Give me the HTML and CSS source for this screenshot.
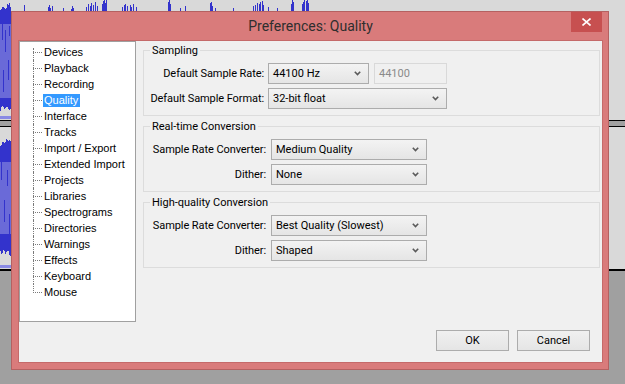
FILE: index.html
```html
<!DOCTYPE html>
<html lang="en">
<head>
<meta charset="utf-8">
<title>Preferences: Quality</title>
<link rel="stylesheet" href="styles.css">
</head>
<body>
<div class="desktop">
  <svg class="backdrop" width="625" height="384" viewBox="0 0 625 384" shape-rendering="crispEdges">
    <rect x="0" y="0" width="625" height="120" fill="#d9d9d9"/>
    <rect x="0" y="120" width="625" height="1" fill="#000"/>
    <rect x="0" y="126" width="625" height="1" fill="#000"/>
    <rect x="0" y="127" width="625" height="142" fill="#d9d9d9"/>
    <rect x="0" y="269" width="625" height="2" fill="#000"/>
    <polygon fill="#3333cc" points="0,12 1,8 2,10 3,4 4,9 5,7 6,10 7,6 8,3 9,7 10,2 11,11 11,112 10,106 9,114 8,104 7,111 6,103 5,113 4,105 3,110 2,102 1,113 0,108"/>
    <rect x="0" y="24" width="11" height="74" fill="#6a6ad8"/>
    <path stroke="#3333cc" stroke-width="1" fill="none" d="M2.5 24V40M5.5 30V52M8.5 60V80M3.5 70V92M9.5 26V36"/>
    <rect x="0" y="116" width="11" height="3" fill="#8a8ae4"/>
    <polygon fill="#3333cc" points="0,152 1,141 2,149 3,136 4,147 5,139 6,144 7,134 8,146 9,137 10,143 11,140 11,250 10,262 9,247 8,256 7,246 6,259 5,248 4,254 3,245 2,261 1,247 0,256"/>
    <rect x="0" y="162" width="11" height="72" fill="#6a6ad8"/>
    <path stroke="#3333cc" stroke-width="1" fill="none" d="M1.5 162V180M4.5 200V222M7.5 170V186M9.5 214V234"/>
    <rect x="0" y="265" width="11" height="3" fill="#8a8ae4"/>
    <path stroke="#3333cc" stroke-width="1" fill="none" d="M9.5 12V3M24.5 12V5M48.5 12V7M49.5 12V5M50.5 12V8M52.5 12V6M63.5 12V8M71.5 12V9M72.5 12V6M73.5 12V8M86.5 12V7M88.5 12V4M90.5 12V6M91.5 12V3M93.5 12V5M95.5 12V2M97.5 12V6M102.5 12V4M103.5 12V1M104.5 12V0M105.5 12V3M106.5 12V0M122.5 12V7M124.5 12V5M125.5 12V4M127.5 12V6M130.5 12V5M131.5 12V7M133.5 12V4M136.5 12V7M168.5 12V2M169.5 12V0M170.5 12V4M180.5 12V8M185.5 12V6M210.5 12V3M211.5 12V2M212.5 12V6M215.5 12V8M233.5 12V8M253.5 12V6M255.5 12V5M257.5 12V3M259.5 12V4M260.5 12V2M262.5 12V1M263.5 12V5M268.5 12V7M277.5 12V8M291.5 12V4M292.5 12V0M293.5 12V2M302.5 12V4M303.5 12V2M304.5 12V0M306.5 12V1M307.5 12V0M308.5 12V3"/>
  </svg>

  <div class="dialog">
    <div class="titlebar">
      <span class="title">Preferences: Quality</span>
      <div class="close">
        <svg width="9" height="8" viewBox="0 0 9 8"><path d="M0.5 0.5L8.5 7.5M8.5 0.5L0.5 7.5" stroke="#fff" stroke-width="1.6" fill="none"/></svg>
      </div>
    </div>
    <div class="client">
      <div class="main">
        <ul class="tree">
          <li><span>Devices</span></li>
          <li><span>Playback</span></li>
          <li><span>Recording</span></li>
          <li class="selected"><span>Quality</span></li>
          <li><span>Interface</span></li>
          <li><span>Tracks</span></li>
          <li><span>Import / Export</span></li>
          <li><span>Extended Import</span></li>
          <li><span>Projects</span></li>
          <li><span>Libraries</span></li>
          <li><span>Spectrograms</span></li>
          <li><span>Directories</span></li>
          <li><span>Warnings</span></li>
          <li><span>Effects</span></li>
          <li><span>Keyboard</span></li>
          <li><span>Mouse</span></li>
        </ul>
        <div class="panel">
          <div class="group">
            <span class="group-title">Sampling</span>
            <div class="rows rows-sampling">
              <span class="label">Default Sample Rate:</span>
              <div class="pair">
                <div class="select select-rate"><span>44100 Hz</span><svg class="chev" width="7" height="5" viewBox="0 0 7 5"><path d="M0.8 0.8L3.5 3.6L6.2 0.8" stroke="#5a5a5a" stroke-width="1.6" fill="none"/></svg></div>
                <div class="textbox">44100</div>
              </div>
              <span class="label">Default Sample Format:</span>
              <div class="select select-format"><span>32-bit float</span><svg class="chev" width="7" height="5" viewBox="0 0 7 5"><path d="M0.8 0.8L3.5 3.6L6.2 0.8" stroke="#5a5a5a" stroke-width="1.6" fill="none"/></svg></div>
            </div>
          </div>
          <div class="group">
            <span class="group-title">Real-time Conversion</span>
            <div class="rows rows-conv">
              <span class="label">Sample Rate Converter:</span>
              <div class="select select-conv"><span>Medium Quality</span><svg class="chev" width="7" height="5" viewBox="0 0 7 5"><path d="M0.8 0.8L3.5 3.6L6.2 0.8" stroke="#5a5a5a" stroke-width="1.6" fill="none"/></svg></div>
              <span class="label">Dither:</span>
              <div class="select select-conv"><span>None</span><svg class="chev" width="7" height="5" viewBox="0 0 7 5"><path d="M0.8 0.8L3.5 3.6L6.2 0.8" stroke="#5a5a5a" stroke-width="1.6" fill="none"/></svg></div>
            </div>
          </div>
          <div class="group">
            <span class="group-title">High-quality Conversion</span>
            <div class="rows rows-conv">
              <span class="label">Sample Rate Converter:</span>
              <div class="select select-conv"><span>Best Quality (Slowest)</span><svg class="chev" width="7" height="5" viewBox="0 0 7 5"><path d="M0.8 0.8L3.5 3.6L6.2 0.8" stroke="#5a5a5a" stroke-width="1.6" fill="none"/></svg></div>
              <span class="label">Dither:</span>
              <div class="select select-conv"><span>Shaped</span><svg class="chev" width="7" height="5" viewBox="0 0 7 5"><path d="M0.8 0.8L3.5 3.6L6.2 0.8" stroke="#5a5a5a" stroke-width="1.6" fill="none"/></svg></div>
            </div>
          </div>
        </div>
      </div>
      <div class="footer">
        <button class="btn">OK</button>
        <button class="btn">Cancel</button>
      </div>
    </div>
  </div>
</div>
</body>
</html>
```

FILE: styles.css
```css
* { box-sizing: border-box; }

html, body {
  margin: 0;
  padding: 0;
}

body {
  width: 625px;
  height: 384px;
  overflow: hidden;
  font-family: Roboto, "Liberation Sans", sans-serif;
  font-size: 11px;
  color: #000;
}

.desktop {
  position: relative;
  width: 625px;
  height: 384px;
  background: #a0a0a0;
}

.backdrop {
  position: absolute;
  left: 0;
  top: 0;
  display: block;
}

.dialog {
  position: absolute;
  left: 11px;
  top: 11px;
  width: 598px;
  height: 359px;
  background: #d97b7b;
  border: 1px solid #b56161;
  padding: 0 6px 7px 7px;
  display: flex;
  flex-direction: column;
}

.titlebar {
  position: relative;
  flex: none;
  height: 29px;
  display: flex;
  justify-content: center;
}

.title {
  font-size: 14px;
  line-height: 16px;
  padding-top: 6px;
  color: #2e2e2e;
}

.close {
  position: absolute;
  right: 0;
  top: 0;
  width: 31px;
  height: 20px;
  background: #c75050;
  display: flex;
  align-items: center;
  justify-content: center;
}

.close svg { display: block; }

.client {
  flex: 1;
  background: #f0f0f0;
  display: flex;
  flex-direction: column;
  box-shadow: 0 0 0 1px #c56a6a;
}

.main {
  display: flex;
  height: 281px;
  flex: none;
}

/* tree */
.tree {
  width: 117px;
  height: 281px;
  margin: 0;
  padding: 2px 0 0 0;
  list-style: none;
  background: #fff;
  border: 1px solid #a0a0a0;
  font-family: "Liberation Sans", Arial, sans-serif;
  font-size: 11px;
}

.tree li {
  position: relative;
  height: 16px;
  padding-left: 23px;
  display: flex;
  align-items: center;
}

.tree li::before {
  content: "";
  position: absolute;
  left: 13px;
  top: 8px;
  width: 9px;
  border-top: 1px dotted #7a7a7a;
}

.tree li::after {
  content: "";
  position: absolute;
  left: 13px;
  top: 0;
  height: 16px;
  border-left: 1px dotted #7a7a7a;
}

.tree li:first-child::after {
  top: 4px;
  height: 12px;
}

.tree li:last-child::after {
  height: 9px;
}

.tree span {
  line-height: 13px;
  padding: 0 2px 0 1px;
  white-space: nowrap;
}

.tree li.selected span {
  background: #3399ff;
  color: #fff;
}

/* panel */
.panel {
  margin-left: 7px;
  width: 457px;
  padding-top: 9px;
  display: flex;
  flex-direction: column;
  gap: 10px;
}

.group {
  position: relative;
  height: 66px;
  border: 1px solid #dcdcdc;
  padding-top: 12px;
}

.group-title {
  position: absolute;
  left: 6px;
  top: -7px;
  padding: 0 2px;
  line-height: 14px;
  background: #f0f0f0;
  white-space: nowrap;
}

.rows {
  display: grid;
  row-gap: 4px;
  align-items: center;
  justify-content: start;
}

.rows-sampling {
  padding-left: 6px;
  grid-template-columns: 114px auto;
  column-gap: 4px;
}

.rows-conv {
  padding-left: 7px;
  grid-template-columns: 115px auto;
  column-gap: 5px;
}

.label {
  justify-self: end;
  white-space: nowrap;
  line-height: 14px;
  letter-spacing: -0.08px;
}

.pair {
  display: flex;
  gap: 5px;
}

.select {
  height: 21px;
  border: 1px solid #acacac;
  background: linear-gradient(#f3f3f3, #e5e5e5);
  display: flex;
  align-items: center;
  justify-content: space-between;
  padding: 0 7px 0 4px;
  white-space: nowrap;
}

.chev { display: block; flex: none; }

.select-rate { width: 101px; }
.select-format { width: 179px; }
.select-conv { width: 156px; }

.textbox {
  width: 73px;
  height: 21px;
  border: 1px solid #d9d9d9;
  background: #f0f0f0;
  color: #8a8a8a;
  padding: 0 4px;
  display: flex;
  align-items: center;
}

/* footer */
.footer {
  display: flex;
  justify-content: flex-end;
  gap: 8px;
  padding: 8px 12px 0 0;
}

.btn {
  width: 73px;
  height: 21px;
  margin: 0;
  padding: 0;
  border: 1px solid #acacac;
  border-radius: 0;
  background: linear-gradient(#f0f0f0, #e5e5e5);
  font-family: Roboto, "Liberation Sans", sans-serif;
  font-size: 11px;
  color: #000;
}
```
